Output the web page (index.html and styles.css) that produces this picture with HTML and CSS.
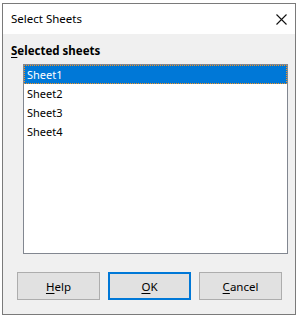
FILE: index.html
```html
<!DOCTYPE html>
<html>
<head>
<meta charset="utf-8">
<link rel="stylesheet" href="styles.css">
</head>
<body>
<div class="window">
  <div class="titlebar">
    <span class="title">Select Sheets</span>
    <svg class="close" width="11" height="11" viewBox="0 0 11 11"><path d="M0.5 0.5L10.5 10.5M10.5 0.5L0.5 10.5" stroke="#111" stroke-width="1.1" fill="none"/></svg>
  </div>
  <div class="content">
    <div class="label"><u>S</u>elected sheets</div>
    <div class="listbox">
      <div class="row selected">Sheet1</div>
      <div class="row">Sheet2</div>
      <div class="row">Sheet3</div>
      <div class="row">Sheet4</div>
    </div>
    <div class="buttons">
      <button class="btn"><u>H</u>elp</button>
      <button class="btn default"><u>O</u>K</button>
      <button class="btn"><u>C</u>ancel</button>
    </div>
  </div>
</div>
</body>
</html>
```
FILE: styles.css
```css
html, body {
  margin: 0;
  background: #ffffff;
  font-family: "Segoe UI", "Noto Sans", "Open Sans", sans-serif;
  font-size: 11px;
  color: #000;
}
.window {
  margin: 3px 0 0 2px;
  width: 292px;
  height: 310px;
  border: 1px solid #7a7a7a;
  background: #f0f0f0;
  display: flex;
  flex-direction: column;
}
.titlebar {
  height: 30px;
  background: #ffffff;
  display: flex;
  align-items: center;
  justify-content: space-between;
  padding: 0 8px 0 8px;
}
.title {
  font-size: 11.5px;
  line-height: 16px;
}
.close {
  display: block;
}
.content {
  flex: 1;
  display: flex;
  flex-direction: column;
  padding: 9px 7px 0 8px;
}
.label {
  font-weight: bold;
  font-size: 11.5px;
  line-height: 16px;
}
.listbox {
  margin: 5px 0 0 12px;
  height: 188px;
  border: 1px solid #828790;
  background: #fff;
}
.row {
  height: 19px;
  line-height: 19px;
  padding-left: 3px;
}
.row.selected {
  background: #0078d7;
  color: #fff;
  border: 1px dotted #f7931e;
  height: 17px;
  line-height: 17px;
  padding-left: 2px;
}
.buttons {
  display: flex;
  gap: 8px;
  margin: 18px 0 0 6px;
}
.btn {
  width: 83px;
  height: 28px;
  margin: 0;
  padding: 0;
  background: #e1e1e1;
  border: 1px solid #adadad;
  font-family: inherit;
  font-size: 11.5px;
  color: #000;
}
.btn.default {
  border: 2px solid #0078d7;
}
u {
  text-decoration-thickness: 1px;
  text-underline-offset: 2px;
}
```
